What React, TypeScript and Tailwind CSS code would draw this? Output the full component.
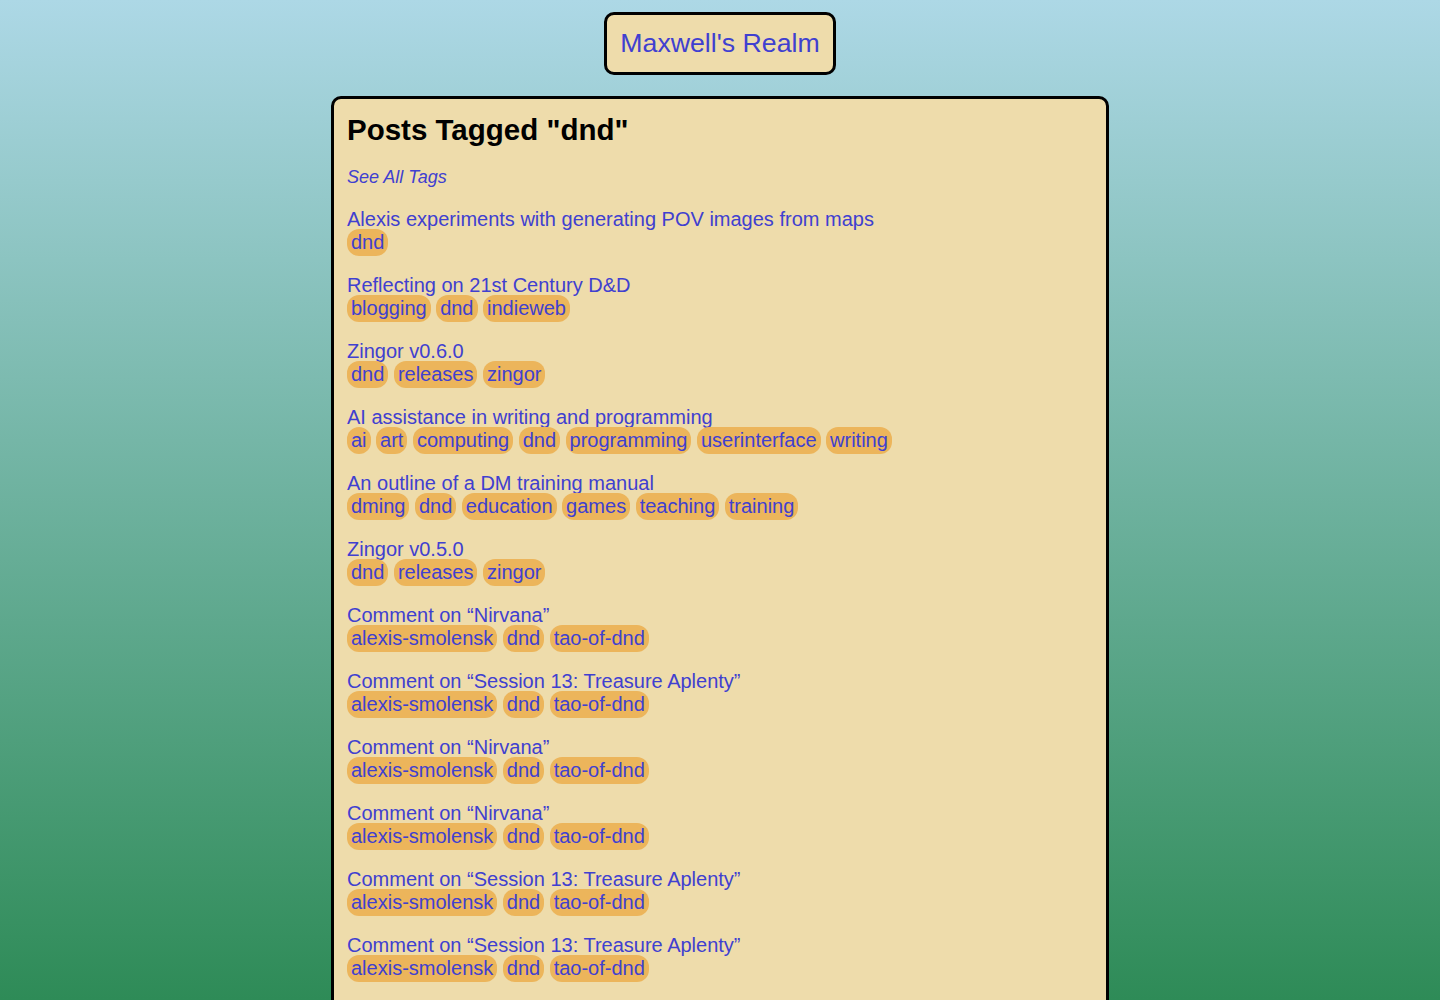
const posts: { title: string; tags: string[] }[] = [
  { title: "Alexis experiments with generating POV images from maps", tags: ["dnd"] },
  { title: "Reflecting on 21st Century D&D", tags: ["blogging", "dnd", "indieweb"] },
  { title: "Zingor v0.6.0", tags: ["dnd", "releases", "zingor"] },
  {
    title: "AI assistance in writing and programming",
    tags: ["ai", "art", "computing", "dnd", "programming", "userinterface", "writing"],
  },
  {
    title: "An outline of a DM training manual",
    tags: ["dming", "dnd", "education", "games", "teaching", "training"],
  },
  { title: "Zingor v0.5.0", tags: ["dnd", "releases", "zingor"] },
  { title: "Comment on \u201cNirvana\u201d", tags: ["alexis-smolensk", "dnd", "tao-of-dnd"] },
  { title: "Comment on \u201cSession 13: Treasure Aplenty\u201d", tags: ["alexis-smolensk", "dnd", "tao-of-dnd"] },
  { title: "Comment on \u201cNirvana\u201d", tags: ["alexis-smolensk", "dnd", "tao-of-dnd"] },
  { title: "Comment on \u201cNirvana\u201d", tags: ["alexis-smolensk", "dnd", "tao-of-dnd"] },
  { title: "Comment on \u201cSession 13: Treasure Aplenty\u201d", tags: ["alexis-smolensk", "dnd", "tao-of-dnd"] },
  { title: "Comment on \u201cSession 13: Treasure Aplenty\u201d", tags: ["alexis-smolensk", "dnd", "tao-of-dnd"] },
  { title: "Comment on \u201cNirvana\u201d", tags: ["alexis-smolensk", "dnd", "tao-of-dnd"] },
];

export default function App() {
  return (
    <div className="min-h-screen bg-[linear-gradient(to_bottom,#add8e6,#2e8b57_1000px)] font-['Liberation_Sans',Arial,sans-serif] text-[#4040d0]">
      {/* Header */}
      <div className="flex justify-center pt-3">
        <a className="rounded-[10px] border-[3px] border-black bg-[#eedcab] px-[13px] py-[12px] text-[26.7px] leading-[33px]">
          Maxwell's Realm
        </a>
      </div>

      {/* Tag listing */}
      <main className="mx-auto mt-[21px] w-[778px] rounded-[10px] border-[3px] border-black bg-[#eedcab] px-[13px] pt-[14px] pb-6">
        <h1 className="text-[29.5px] font-bold leading-[34px] text-black">Posts Tagged "dnd"</h1>
        <p className="mt-[20px] text-[18px] italic leading-[20px]">See All Tags</p>

        <div className="mt-[21px] flex flex-col gap-[18px]">
          {posts.map((post, i) => (
            <div key={i}>
              <a className="block text-[20px] leading-[23px]">{post.title}</a>
              <div className="-mt-[2px] flex flex-wrap gap-[5.5px]">
                {post.tags.map((tag) => (
                  <span
                    key={tag}
                    className="rounded-[12px] bg-[#ecb55b] px-[4px] text-[20px] leading-[27px]"
                  >
                    {tag}
                  </span>
                ))}
              </div>
            </div>
          ))}
        </div>
      </main>
    </div>
  );
}
